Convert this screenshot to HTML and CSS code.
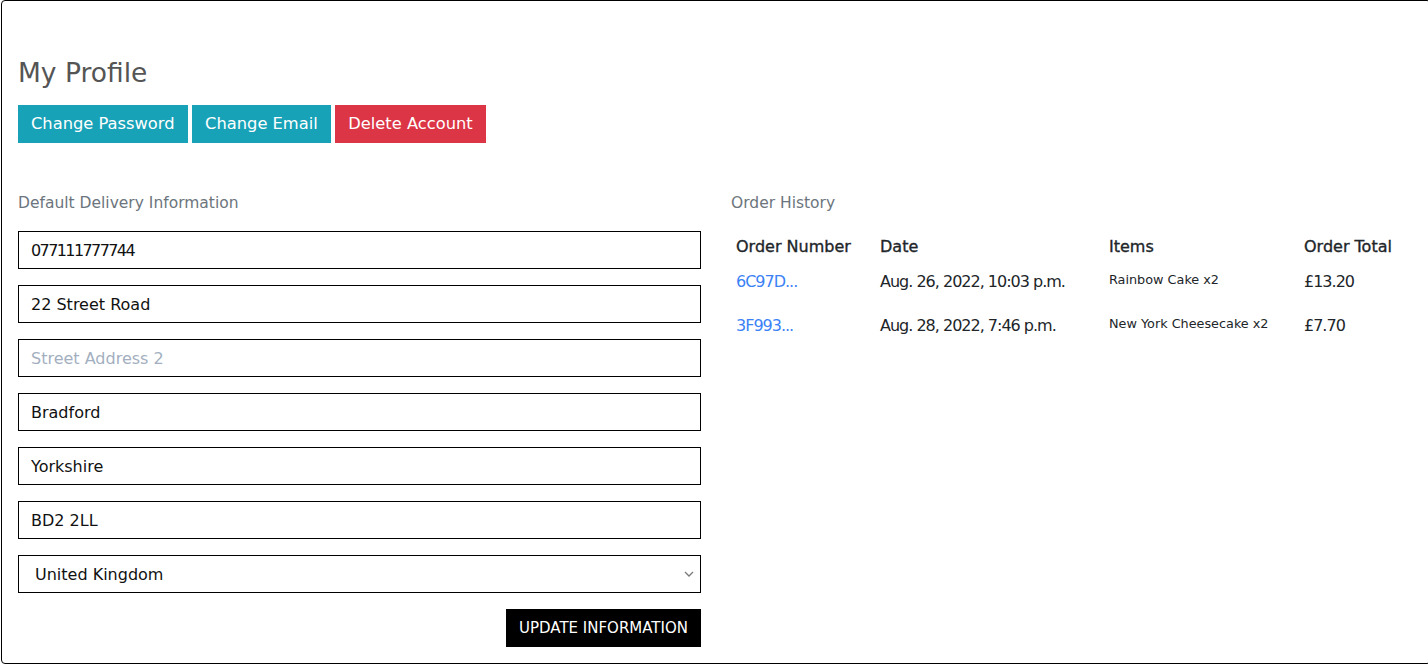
FILE: index.html
```html
<!DOCTYPE html>
<html lang="en">
<head>
<meta charset="utf-8">
<title>My Profile</title>
<link rel="stylesheet" href="styles.css">
</head>
<body>
<div class="page">
  <h2 class="title">My Profile</h2>
  <div class="actions">
    <a class="btn btn-info" href="#">Change Password</a>
    <a class="btn btn-info" href="#">Change Email</a>
    <button class="btn btn-danger" type="button">Delete Account</button>
  </div>
  <div class="cols">
    <section class="delivery">
      <p class="section-label label-left">Default Delivery Information</p>
      <form class="profile-form">
        <input class="field field-phone" type="text" value="077111777744">
        <input class="field" type="text" value="22 Street Road">
        <input class="field" type="text" placeholder="Street Address 2">
        <input class="field" type="text" value="Bradford">
        <input class="field" type="text" value="Yorkshire">
        <input class="field" type="text" value="BD2 2LL">
        <div class="select-wrap">
          <select class="field field-select">
            <option>United Kingdom</option>
            <option>Ireland</option>
          </select>
          <svg class="chevron" width="10" height="6" viewBox="0 0 10 6" aria-hidden="true">
            <path d="M1 1 L5 5 L9 1" fill="none" stroke="#7a7a7a" stroke-width="1.3"/>
          </svg>
        </div>
        <div class="form-actions">
          <button class="btn btn-black" type="button">UPDATE INFORMATION</button>
        </div>
      </form>
    </section>
    <section class="history">
      <p class="section-label label-right">Order History</p>
      <table class="orders">
        <colgroup>
          <col class="c1"><col class="c2"><col class="c3"><col class="c4">
        </colgroup>
        <thead>
          <tr><th>Order Number</th><th>Date</th><th>Items</th><th>Order Total</th></tr>
        </thead>
        <tbody>
          <tr>
            <td class="tight"><a href="#">6C97D...</a></td>
            <td class="tight">Aug. 26, 2022, 10:03 p.m.</td>
            <td><p class="item">Rainbow Cake x2</p></td>
            <td class="tight">£13.20</td>
          </tr>
          <tr>
            <td class="tight"><a href="#">3F993...</a></td>
            <td class="tight">Aug. 28, 2022, 7:46 p.m.</td>
            <td><p class="item">New York Cheesecake x2</p></td>
            <td class="tight">£7.70</td>
          </tr>
        </tbody>
      </table>
    </section>
  </div>
</div>
</body>
</html>
```
FILE: styles.css
```css
html, body {
  margin: 0;
  padding: 0;
  overflow: hidden;
  background: #fff;
}
body {
  font-family: "DejaVu Sans", "Open Sans", sans-serif;
  font-size: 16px;
  line-height: 24px;
  color: #212529;
}
.page {
  box-sizing: border-box;
  width: 1430px;
  height: 664px;
  margin-left: 1px;
  border: 1px solid #000;
  border-radius: 4px;
  padding: 55px 0 0 16px;
}
.title {
  margin: 0 0 15px;
  font-size: 26.5px;
  line-height: 34px;
  font-weight: normal;
  color: #555;
}
.actions {
  display: flex;
  gap: 4.5px;
}
.btn {
  display: inline-block;
  box-sizing: border-box;
  height: 38px;
  padding: 6px 12px;
  border: 1px solid transparent;
  border-radius: 0;
  font-family: inherit;
  font-size: 16.3px;
  line-height: 24px;
  color: #fff;
  text-decoration: none;
  cursor: pointer;
  white-space: nowrap;
}
.btn-info {
  background: #17a2b8;
  border-color: #17a2b8;
}
.btn-danger {
  background: #dc3545;
  border-color: #dc3545;
}
.btn-black {
  background: #000;
  border-color: #000;
  font-size: 15px;
}
.cols {
  display: grid;
  grid-template-columns: 683px 683px;
  column-gap: 30px;
  margin-top: 48px;
}
.section-label {
  margin: 0;
  font-size: 15.5px;
  line-height: 24px;
  color: #6c757d;
}
.label-left { margin-bottom: 16px; }
.label-right { margin-bottom: 14px; }
.profile-form {
  display: flex;
  flex-direction: column;
}
.field {
  box-sizing: border-box;
  width: 100%;
  height: 38px;
  margin: 0 0 16px;
  padding: 0 12px;
  border: 1px solid #000;
  border-radius: 0;
  background: #fff;
  font-family: inherit;
  font-size: 16px;
  color: #111;
  outline: none;
}
.field::placeholder {
  color: #a3afc0;
}
.field-phone {
  letter-spacing: -1.6px;
}
.select-wrap {
  position: relative;
}
.field-select {
  -webkit-appearance: none;
  appearance: none;
  padding: 0 30px 0 16px;
}
.chevron {
  position: absolute;
  right: 7px;
  top: 16px;
}
.form-actions {
  display: flex;
  justify-content: flex-end;
}
.orders {
  width: 683px;
  table-layout: fixed;
  border-collapse: collapse;
}
.c1 { width: 144px; }
.c2 { width: 229px; }
.c3 { width: 195px; }
.c4 { width: 115px; }
.orders th,
.orders td {
  padding: 7px 5px 4.8px;
  text-align: left;
  vertical-align: top;
  white-space: nowrap;
}
.orders th {
  padding-top: 6px;
  padding-bottom: 3.6px;
  font-weight: normal;
  color: #212529;
  -webkit-text-stroke: 0.35px #212529;
}
.orders td.tight {
  letter-spacing: -1px;
}
.orders a {
  color: #3b82f6;
  text-decoration: none;
}
.item {
  margin: 0 0 13.8px;
  font-size: 12.8px;
  line-height: 19.2px;
}
```
